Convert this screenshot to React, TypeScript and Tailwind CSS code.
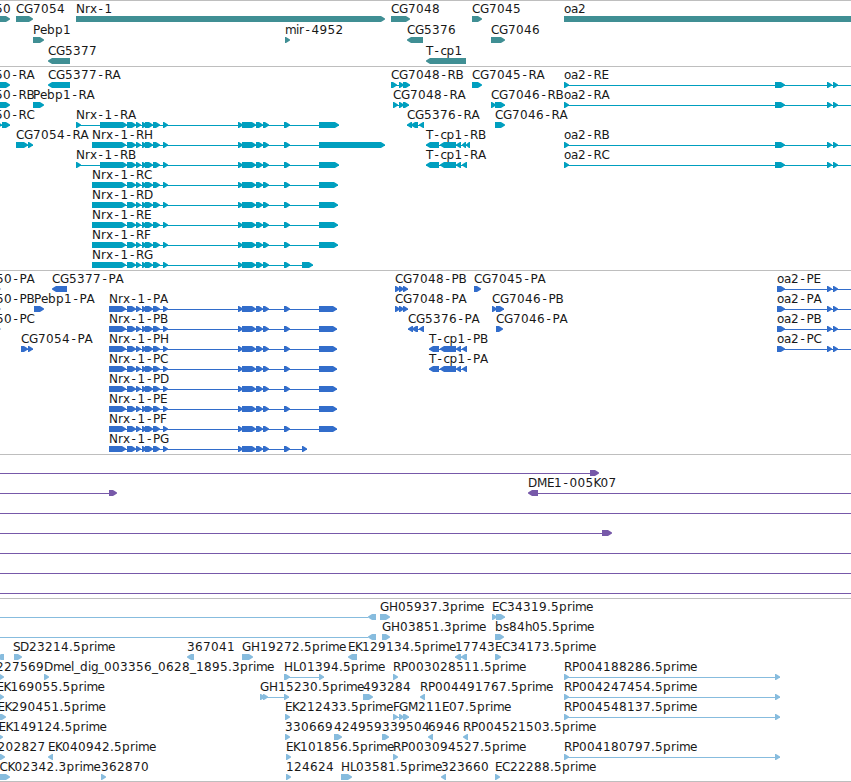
import React from 'react';

type Span = [number, number];

interface Feature {
  row: number;
  name?: string;
  x?: number;
  spans: Span[];
  reverse?: boolean;
  // extent of the thin connector, defaults to the extent of the spans
  line?: Span;
}

interface TrackProps {
  features: Feature[];
  color: string;
  height: string;
  pitch?: number;
}

const WIDTH = 851;

const ADVANCE: Record<string, number> = {
  C: 8, G: 9, N: 9, P: 7, R: 8, A: 8, B: 8, D: 9, E: 7, F: 6, H: 9, K: 7, L: 6, M: 10, S: 7, T: 7,
  a: 7, b: 8, c: 6, d: 8, e: 7, g: 7, h: 7, i: 3, l: 3, m: 11, o: 7, p: 8, r: 5, s: 6, x: 7,
  '-': 7.5, '.': 4, _: 6,
};

function glyphPositions(name: string, start: number) {
  let x = start;
  return Array.from(name)
    .map((char) => {
      // the hyphen is centred in its cell
      const at = char === '-' ? x + 1.5 : x;
      x += ADVANCE[char] ?? 8;
      return at;
    })
    .join(' ');
}

function arrow([from, to]: Span, y: number, reverse?: boolean) {
  const head = Math.min(5, to - from);
  const shoulder = Math.max(head - 1, 0);
  if (reverse) {
    return `${to},${y} ${from + shoulder},${y} ${from},${y + 2.5} ${from},${y + 3.5} ${from + shoulder},${y + 6} ${to},${y + 6}`;
  }
  return `${from},${y} ${to - shoulder},${y} ${to},${y + 2.5} ${to},${y + 3.5} ${to - shoulder},${y + 6} ${from},${y + 6}`;
}

function Track({ features, color, height, pitch = 20 }: TrackProps) {
  return (
    <section className={`w-full overflow-hidden border-t border-[#bebebe] ${height} ${color}`}>
      <svg width={WIDTH} height="100%" className="block" fill="currentColor">
        {features.map((feature, i) => {
          const y = 15 + feature.row * pitch;
          const xs = feature.spans.flat();
          const [from, to] = feature.line ?? [Math.min(...xs), Math.max(...xs)];
          const connected = feature.line || feature.spans.length > 1;
          return (
            <g key={i}>
              {connected && <rect x={from} y={y + 3} width={to - from} height={1} shapeRendering="crispEdges" />}
              {feature.spans.map((span, j) => (
                <polygon key={j} points={arrow(span, y, feature.reverse)} />
              ))}
              {feature.name && (
                <text
                  x={glyphPositions(feature.name, feature.x ?? from)}
                  y={y - 3}
                  className="fill-[#181818] font-['DejaVu_Sans',sans-serif] text-[12px]"
                >
                  {feature.name}
                </text>
              )}
            </g>
          );
        })}
      </svg>
    </section>
  );
}

const genes: Feature[] = [
  { row: 0, name: 'CG7050', x: -38, spans: [[-38, 10]] },
  { row: 0, name: 'CG7054', spans: [[16, 33]] },
  { row: 0, name: 'Nrx-1', spans: [[76, 385]] },
  { row: 0, name: 'CG7048', spans: [[391, 410]] },
  { row: 0, name: 'CG7045', spans: [[472, 482]] },
  { row: 0, name: 'oa2', spans: [[564, 900]] },
  { row: 1, name: 'Pebp1', spans: [[33, 44]] },
  { row: 1, name: 'mir-4952', spans: [[285, 290]] },
  { row: 1, name: 'CG5376', spans: [[407, 423]], reverse: true },
  { row: 1, name: 'CG7046', spans: [[491, 505]] },
  { row: 2, name: 'CG5377', spans: [[48, 70]], reverse: true },
  { row: 2, name: 'T-cp1', spans: [[426, 466]], reverse: true },
];

// Exons shared by every Nrx-1 isoform
const nrxExons: Span[] = [
  [127, 136], [136, 141], [142, 147], [145, 153], [153, 160], [163, 168],
  [238, 243], [242, 256], [256, 263], [263, 269], [284, 290],
];

const nrx = (row: number, name: string, head: Span[], tail: Span): Feature => ({
  row,
  name,
  spans: [...head, ...nrxExons, tail],
});

const oa2Transcript = (row: number, name: string): Feature => ({
  row,
  name,
  spans: [[564, 569], [775, 785], [827, 832], [833, 838]],
  line: [564, WIDTH],
});

const transcripts: Feature[] = [
  { row: 0, name: 'CG7050-RA', x: -38, spans: [[-20, 10]] },
  { row: 0, name: 'CG5377-RA', spans: [[48, 70]], reverse: true },
  { row: 0, name: 'CG7048-RB', spans: [[391, 397], [399, 404], [403, 410]] },
  { row: 0, name: 'CG7045-RA', spans: [[472, 482]] },
  { row: 1, name: 'CG7050-RB', x: -38, spans: [[-20, 10]] },
  { row: 1, name: 'Pebp1-RA', spans: [[33, 44]] },
  { row: 1, name: 'CG7048-RA', spans: [[393, 398], [399, 404], [403, 409]] },
  { row: 1, name: 'CG7046-RB', spans: [[491, 496], [495, 505]] },
  { row: 2, name: 'CG7050-RC', x: -38, spans: [[-20, 2], [2, 10]] },
  nrx(2, 'Nrx-1-RA', [[76, 81], [100, 127]], [319, 339]),
  { row: 2, name: 'CG5376-RA', spans: [[407, 412], [411, 418], [419, 424]], reverse: true },
  { row: 2, name: 'CG7046-RA', spans: [[495, 505]] },
  { row: 3, name: 'CG7054-RA', spans: [[16, 28], [28, 33]] },
  nrx(3, 'Nrx-1-RH', [[92, 126]], [319, 385]),
  { row: 3, name: 'T-cp1-RB', spans: [[426, 439], [440, 456], [456, 461], [462, 466], [466, 470]], reverse: true },
  nrx(4, 'Nrx-1-RB', [[76, 81], [100, 127]], [319, 339]),
  { row: 4, name: 'T-cp1-RA', spans: [[426, 439], [440, 456], [456, 461], [462, 467]], reverse: true },
  nrx(5, 'Nrx-1-RC', [[92, 126]], [319, 338]),
  nrx(6, 'Nrx-1-RD', [[92, 126]], [319, 338]),
  nrx(7, 'Nrx-1-RE', [[92, 126]], [319, 338]),
  nrx(8, 'Nrx-1-RF', [[92, 126]], [319, 338]),
  nrx(9, 'Nrx-1-RG', [[92, 126]], [302, 313]),
  oa2Transcript(0, 'oa2-RE'),
  oa2Transcript(1, 'oa2-RA'),
  oa2Transcript(3, 'oa2-RB'),
  oa2Transcript(4, 'oa2-RC'),
];

const oa2Protein = (row: number, name: string): Feature => ({
  row,
  name,
  spans: [[777, 785], [827, 832], [833, 838]],
  line: [777, WIDTH],
});

const proteins: Feature[] = [
  { row: 0, name: 'CG7050-PA', x: -37, spans: [[-20, 0.5]] },
  { row: 0, name: 'CG5377-PA', spans: [[52, 67]], reverse: true },
  { row: 0, name: 'CG7048-PB', spans: [[395, 400], [399, 404], [403, 408]] },
  { row: 0, name: 'CG7045-PA', spans: [[474, 481]] },
  { row: 1, name: 'CG7050-PB', x: -37, spans: [[-20, 0.5]] },
  { row: 1, name: 'Pebp1-PA', spans: [[34, 44]] },
  { row: 1, name: 'CG7048-PA', spans: [[395, 400], [399, 404], [403, 408]] },
  { row: 1, name: 'CG7046-PB', spans: [[492, 497], [496, 504]] },
  { row: 2, name: 'CG7050-PC', x: -37, spans: [[-20, 0.5]] },
  { row: 2, name: 'CG5376-PA', spans: [[408, 413], [412, 418], [419, 424]], reverse: true },
  { row: 2, name: 'CG7046-PA', spans: [[496, 503]] },
  { row: 3, name: 'CG7054-PA', spans: [[21, 28], [28, 33]] },
  { row: 3, name: 'T-cp1-PB', spans: [[429, 439], [440, 456], [456, 461], [462, 467]], reverse: true },
  { row: 4, name: 'T-cp1-PA', spans: [[429, 439], [440, 456], [456, 461], [462, 467]], reverse: true },
  nrx(1, 'Nrx-1-PA', [[109, 126]], [319, 337]),
  nrx(2, 'Nrx-1-PB', [[109, 126]], [319, 337]),
  nrx(3, 'Nrx-1-PH', [[109, 126]], [319, 337]),
  nrx(4, 'Nrx-1-PC', [[109, 126]], [319, 337]),
  nrx(5, 'Nrx-1-PD', [[109, 126]], [319, 337]),
  nrx(6, 'Nrx-1-PE', [[109, 126]], [319, 337]),
  nrx(7, 'Nrx-1-PF', [[109, 126]], [319, 337]),
  nrx(8, 'Nrx-1-PG', [[109, 126]], [302, 307]),
  oa2Protein(0, 'oa2-PE'),
  oa2Protein(1, 'oa2-PA'),
  oa2Protein(2, 'oa2-PB'),
  oa2Protein(3, 'oa2-PC'),
];

const clones: Feature[] = [
  { row: 0, spans: [[590, 599]], line: [0, 590] },
  { row: 1, spans: [[109, 117]], line: [0, 109] },
  { row: 1, name: 'DME1-005K07', x: 528, spans: [[528, 538]], line: [538, WIDTH], reverse: true },
  { row: 2, spans: [], line: [0, WIDTH] },
  { row: 3, spans: [[602, 612]], line: [0, 602] },
  { row: 4, spans: [], line: [0, WIDTH] },
  { row: 5, spans: [], line: [0, WIDTH] },
  { row: 6, spans: [], line: [0, WIDTH] },
];

const ests: Feature[] = [
  { row: 0, spans: [[368, 376]], line: [0, 368], reverse: true },
  { row: 0, name: 'GH05937.3prime', spans: [[380, 390]] },
  { row: 0, name: 'EC34319.5prime', spans: [[492, 497], [496, 505]] },
  { row: 1, spans: [[368, 376]], line: [0, 368], reverse: true },
  { row: 1, name: 'GH03851.3prime', spans: [[382, 390]] },
  { row: 1, name: 'bs84h05.5prime', spans: [[495, 504]] },
  { row: 2, spans: [[-3, 4]], reverse: true },
  { row: 2, name: 'SD23214.5prime', x: 13, spans: [[14, 22]] },
  { row: 2, name: '367041', spans: [[187, 194]], reverse: true },
  { row: 2, name: 'GH19272.5prime', spans: [[242, 253]] },
  { row: 2, name: 'EK129134.5prime', spans: [[348, 357]], reverse: true },
  { row: 2, name: '17743', spans: [[455, 461], [461, 467]], reverse: true },
  { row: 2, name: 'EC34173.5prime', spans: [[495, 501]] },
  { row: 3, name: '227569', x: -4, spans: [[-4, 4]] },
  { row: 3, name: 'Dmel_dig_003356_0628_1895.3prime', spans: [[44, 49]] },
  { row: 3, name: 'HL01394.5prime', spans: [[284, 290], [319, 324]] },
  { row: 3, name: 'RP003028511.5prime', spans: [[393, 398]] },
  { row: 3, name: 'RP004188286.5prime', spans: [[564, 569], [775, 780]] },
  { row: 4, name: 'EK169055.5prime', x: -3.5, spans: [[-4, 4]] },
  { row: 4, name: 'GH15230.5prime', spans: [[260, 265], [263, 268], [284, 289]] },
  { row: 4, name: '493284', spans: [[363, 373]] },
  { row: 4, name: 'RP004491767.5prime', spans: [[420, 425]], reverse: true },
  { row: 4, name: 'RP004247454.5prime', spans: [[564, 569], [775, 780]] },
  { row: 5, name: 'EK290451.5prime', x: -2.5, spans: [[-3, 6]] },
  { row: 5, name: 'EK212433.5prime', spans: [[285, 290]] },
  { row: 5, name: 'FGM211E07.5prime', spans: [[393, 398], [399, 404], [403, 409]] },
  { row: 5, name: 'RP004548137.5prime', spans: [[564, 569], [775, 780]] },
  { row: 6, name: 'EK149124.5prime', x: -1.5, spans: [[-2, 3]] },
  { row: 6, name: '330669', spans: [[285, 290]] },
  { row: 6, name: '424959', spans: [[334, 342]] },
  { row: 6, name: '339504', spans: [[382, 389]] },
  { row: 6, name: '6946', spans: [[428, 433]], reverse: true },
  { row: 6, name: 'RP004521503.5prime', spans: [[463, 468]], reverse: true },
  { row: 7, name: '202827', x: -2.5, spans: [[-3, 5]] },
  { row: 7, name: 'EK040942.5prime', spans: [[48, 53]], reverse: true },
  { row: 7, name: 'EK101856.5prime', spans: [[286, 291]] },
  { row: 7, name: 'RP003094527.5prime', spans: [[393, 398]] },
  { row: 7, name: 'RP004180797.5prime', spans: [[564, 569], [775, 780]] },
  { row: 8, name: 'CK02342.3prime', x: -0.5, spans: [[-1, 10]] },
  { row: 8, name: '362870', spans: [[101, 106]] },
  { row: 8, name: '124624', spans: [[286, 291]] },
  { row: 8, name: 'HL03581.5prime', spans: [[341, 352]] },
  { row: 8, name: '323660', spans: [[441, 446]], reverse: true },
  { row: 8, name: 'EC22288.5prime', spans: [[495, 500]] },
];

export default function App() {
  return (
    <main className="flex h-[782px] w-[851px] flex-col overflow-hidden border-b border-[#bebebe] bg-white">
      <Track features={genes} color="text-[#408f94]" height="h-[66px]" pitch={21} />
      <Track features={transcripts} color="text-[#009fbf]" height="h-[204px]" />
      <Track features={proteins} color="text-[#326dcb]" height="h-[184px]" />
      <Track features={clones} color="text-[#7759a9]" height="h-[144px]" />
      <Track features={ests} color="text-[#87bcde]" height="h-[183px]" />
    </main>
  );
}
